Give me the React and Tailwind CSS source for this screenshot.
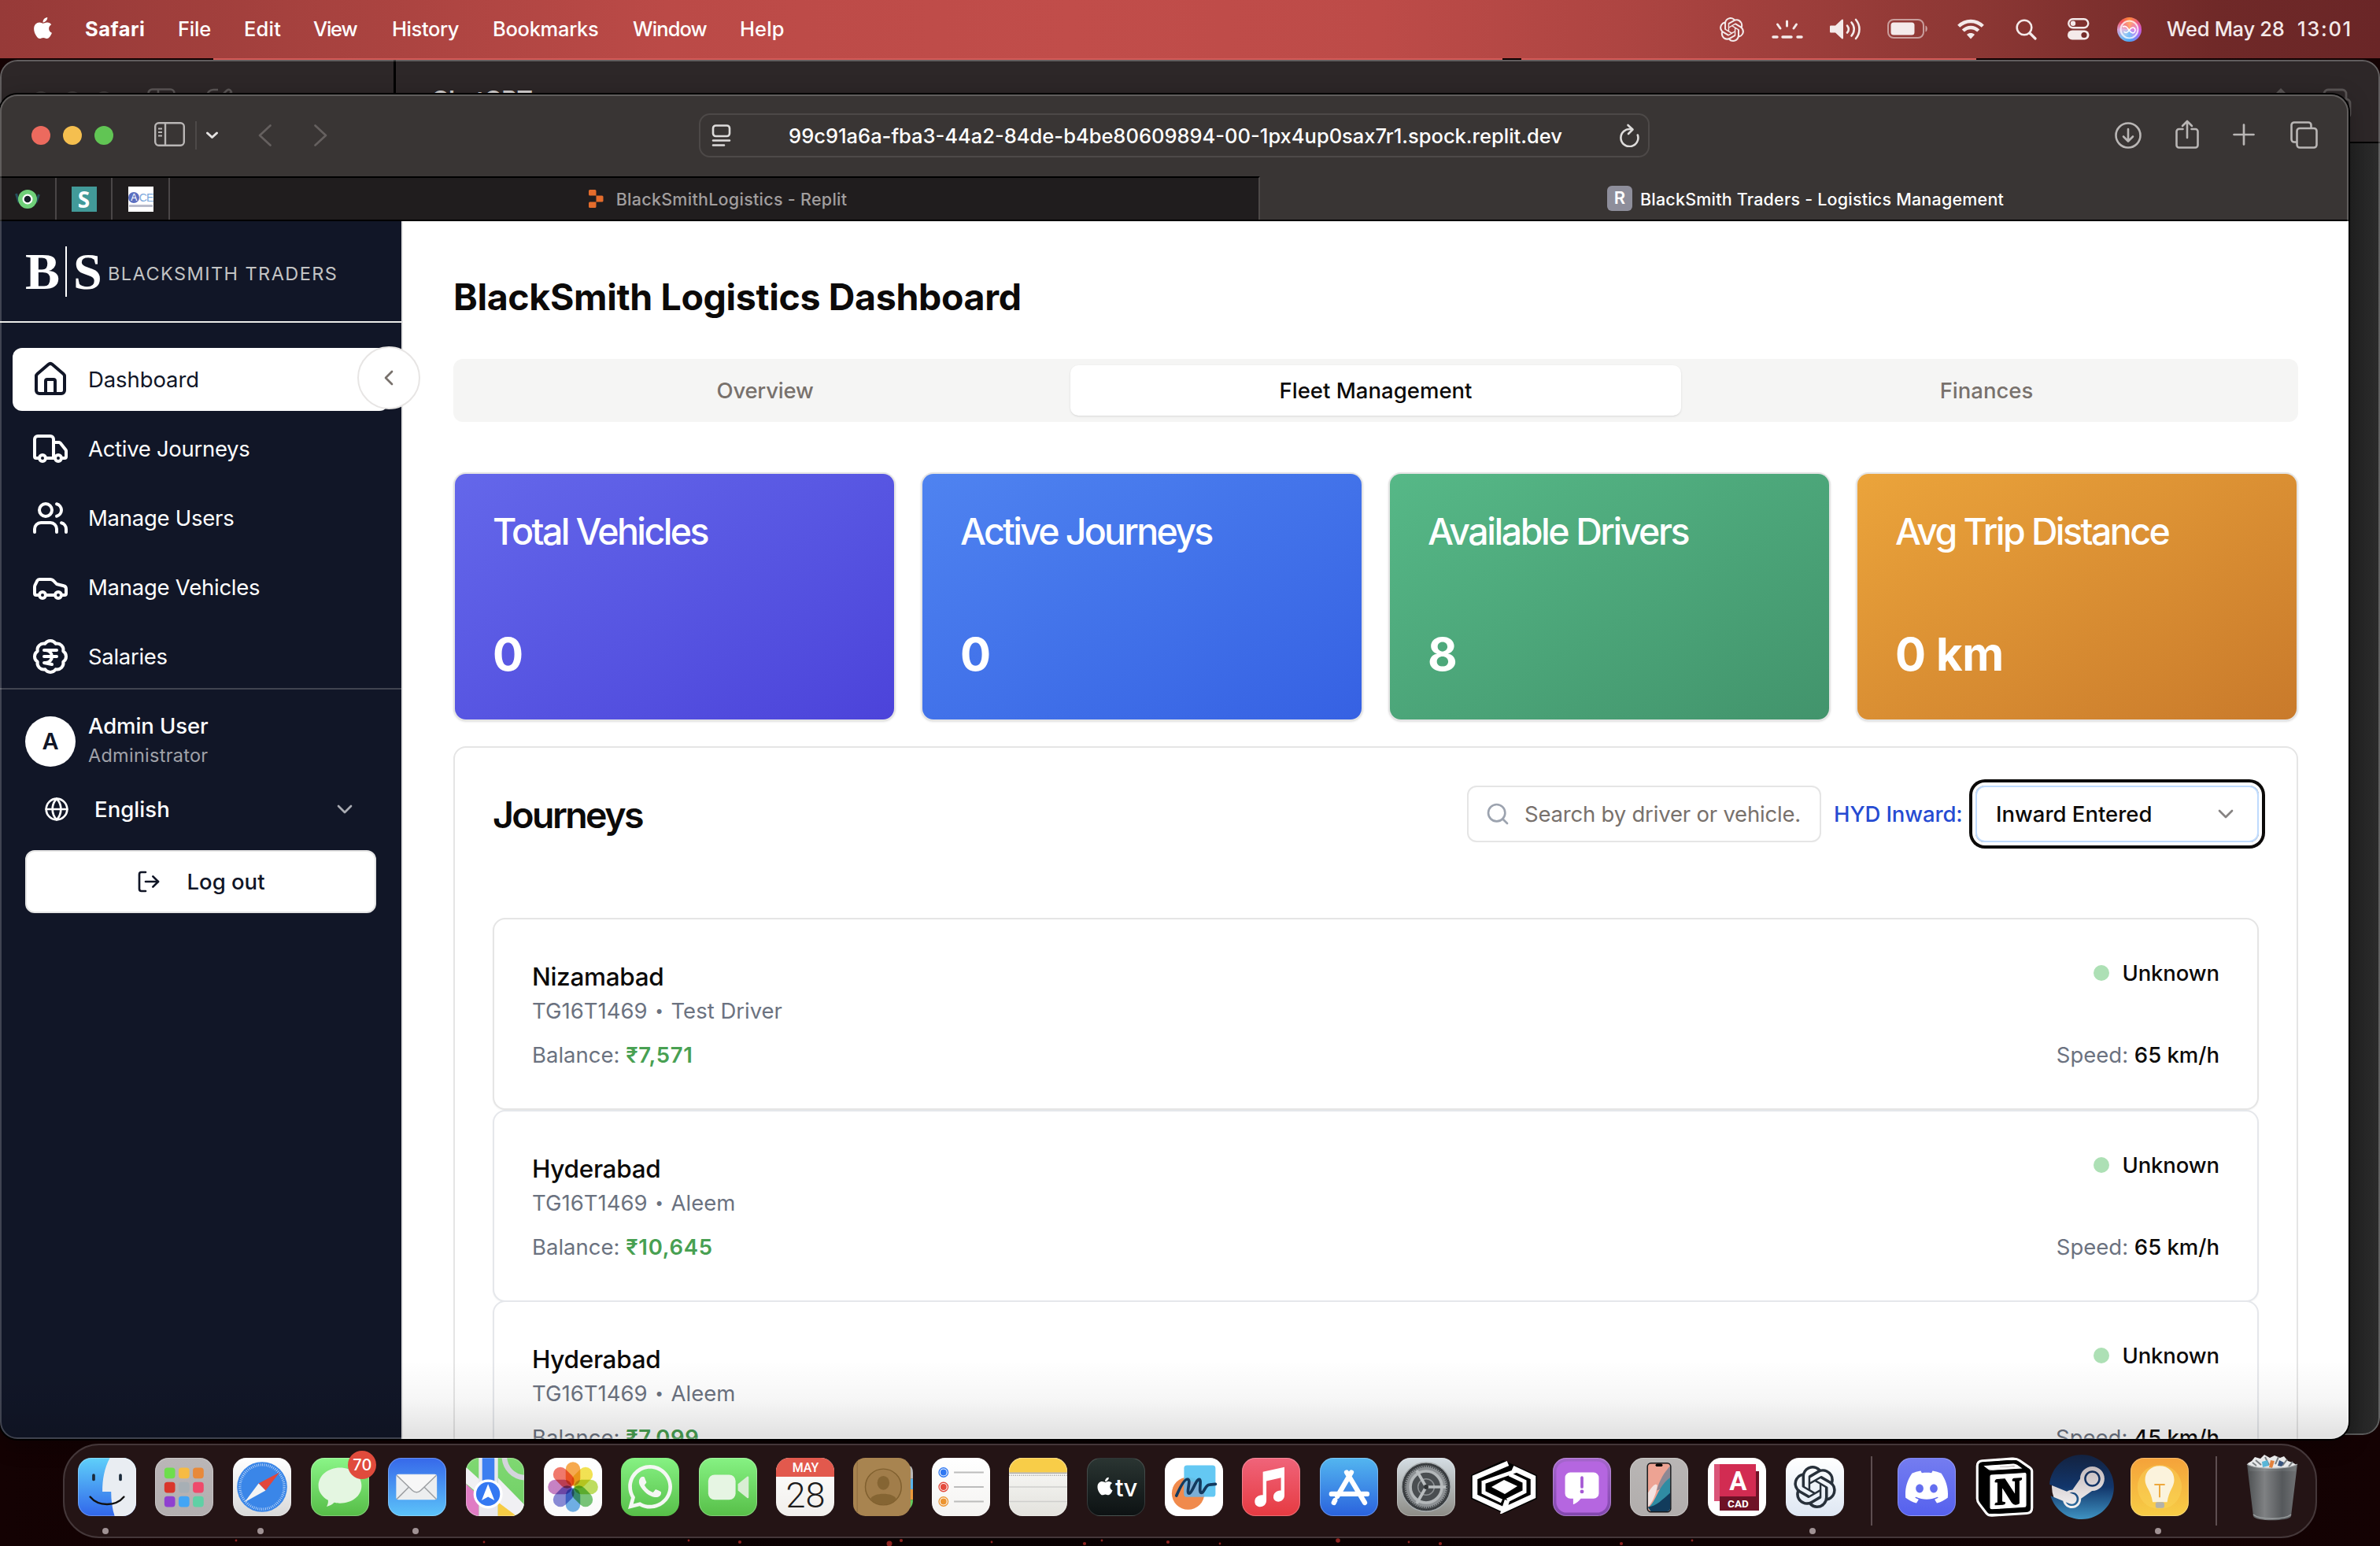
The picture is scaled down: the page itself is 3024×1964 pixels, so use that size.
import React from "react";
import {
  House, Truck, Users, Car, BadgeIndianRupee, ChevronLeft, ChevronDown, Globe, LogOut, Search,
} from "lucide-react";
import { SiOpenai, SiNotion, SiSteam, SiDiscord } from "react-icons/si";
import { FaApple, FaWhatsapp } from "react-icons/fa";

/* ---------- menu bar ---------- */

const MENUS = [
  ["File", "w-[84px] tracking-[-0.2px]"],
  ["Edit", "w-[88px] tracking-[0.2px]"],
  ["View", "w-[100px] tracking-[-1.2px]"],
  ["History", "w-[128px] tracking-[-0.4px]"],
  ["Bookmarks", "w-[178px] tracking-[-0.3px]"],
  ["Window", "w-[136px] tracking-[-0.9px]"],
  ["Help", "tracking-[0.1px]"],
];

function MenuBar() {
  return (
    <div className="absolute inset-x-0 top-0 flex h-[74px] items-center bg-[linear-gradient(90deg,#973a38_0%,#a5413e_12%,#bb4a47_28%,#c14d4a_45%,#bd4b48_58%,#ae4542_68%,#8c3734_83%,#702928_93%,#6a2627_100%)] pl-[41px] text-[25.5px] font-medium text-white">
      <div className="flex w-[67px]">
        <FaApple className="mb-[4px] size-[31px] -translate-x-[2px]" />
      </div>
      <div className="w-[118px] font-bold tracking-[0.5px]">Safari</div>
      {MENUS.map(([label, cls]) => (
        <div key={label} className={cls}>{label}</div>
      ))}
      <div className="ml-auto flex w-[839px] items-center text-[#f4eaea]">
        <div className="w-[66px]"><SiOpenai className="size-[31px]" /></div>
        <div className="w-[74px]">
          <svg width="40" height="24" viewBox="0 0 40 24" stroke="currentColor" strokeWidth="3" strokeLinecap="round">
            <path d="M19.5 2v6M7.500 6l3.500 5M31.500 6l-3.500 5" />
            <path d="M2 22h5M14 22h11M33 22h5" strokeWidth="3.500" />
          </svg>
        </div>
        <div className="w-[73px]">
          <svg width="40" height="28" viewBox="0 0 40 28" fill="none" stroke="currentColor" strokeWidth="2.600" strokeLinecap="round">
            <path d="M1 9.500h6l8-7.500c1-1 2-.5 2 1v22c0 1.500-1 2-2 1l-8-7.500H1.500C.7 18.500 0 18 0 17v-6c0-1 .5-1.500 1-1.500z" fill="currentColor" stroke="none" />
            <path d="M22 9.500c2.300 3 2.300 6.500 0 9M27.500 5.500c4.300 5 4.300 12 0 17M33 2c6 7 6 17 0 24" />
          </svg>
        </div>
        <div className="w-[89px]">
          <svg width="52" height="26" viewBox="0 0 52 26">
            <rect x="1" y="1" width="45" height="23" rx="7" fill="none" stroke="#fff" strokeOpacity=".5" strokeWidth="2" />
            <rect x="4.500" y="4.500" width="30" height="16" rx="3.500" fill="currentColor" />
            <path d="M48.500 8.500c3 1 3 7 0 8z" fill="#fff" fillOpacity=".55" />
          </svg>
        </div>
        <div className="w-[74px]">
          <svg width="34" height="26" viewBox="0 0 34 26" fill="none" stroke="currentColor" strokeWidth="4.400">
            <path d="M1.700 9.300C10.300 .8 23.700 .8 32.300 9.300" />
            <path d="M7.300 15C12.800 9.600 21.200 9.600 26.700 15" />
            <path d="M17 25.500l-5-5.500c2.800-2.600 7.200-2.600 10 0z" fill="currentColor" stroke="none" />
          </svg>
        </div>
        <div className="w-[66px]">
          <svg width="27" height="27" viewBox="0 0 27 27" fill="none" stroke="currentColor" strokeWidth="2.600" strokeLinecap="round">
            <circle cx="11" cy="11" r="9.300" />
            <path d="M18 18l7 7" strokeWidth="3.200" />
          </svg>
        </div>
        <div className="w-[63px]">
          <svg width="28" height="28" viewBox="0 0 28 28" fill="none" stroke="currentColor" strokeWidth="2.400">
            <rect x="1.300" y="1.300" width="25" height="11" rx="5.500" />
            <circle cx="7" cy="6.800" r="3.200" fill="currentColor" stroke="none" />
            <rect x="0" y="15.500" width="27.500" height="12" rx="6" fill="currentColor" stroke="none" />
            <circle cx="21" cy="21.500" r="3.600" fill="#742b2a" stroke="none" />
          </svg>
        </div>
        <div className="w-[63px]">
          <div className="flex size-[31px] items-center justify-center rounded-full bg-[conic-gradient(from_0deg,#ff8a3c,#f0607c,#d05ad8,#8a7cf5,#4aa8f5,#7fb8f0,#d8a0d8,#f04f5a,#ff8a3c)]">
            <svg width="25" height="25" viewBox="0 0 25 25" fill="none" stroke="#fff" strokeWidth="2">
              <circle cx="12.500" cy="12.500" r="11" strokeOpacity=".75" fill="#ffffff40" />
              <path d="M4 9c4-2 6 1 8 4s5 5 7 3 1-6-2-6-4 3-6 5-4 2-5 0" strokeWidth="1.600" />
            </svg>
          </div>
        </div>
        <div className="w-[166px] tracking-[-0.300px]">Wed May 28</div>
        <div className="tracking-[1.700px]">13:01</div>
      </div>
    </div>
  );
}

/* ---------- browser chrome ---------- */

function Toolbar() {
  return (
    <div className="flex h-[104px] shrink-0 items-center bg-[#393534] pl-[40px] text-[#b9b6b5]">
      <div className="flex gap-4">
        <span className="size-6 rounded-full bg-[#ec6a5e]" />
        <span className="size-6 rounded-full bg-[#f5bf4f]" />
        <span className="size-6 rounded-full bg-[#61c554]" />
      </div>
      <svg className="mb-[3px] ml-[52px]" width="39" height="31" viewBox="0 0 39 31" fill="none" stroke="currentColor" strokeWidth="2.400">
        <rect x="1.200" y="1.200" width="36.600" height="28.600" rx="4.500" />
        <path d="M14 1v29" />
        <path d="M5 8.500h5M5 13h5M5 17.500h5" strokeWidth="2" />
      </svg>
      <span className="ml-[13px] h-9 w-[2px] bg-[#4d4948]" />
      <svg className="ml-[11px]" width="17" height="10" viewBox="0 0 17 10" fill="none" stroke="#e4e2e1" strokeWidth="3" strokeLinecap="round" strokeLinejoin="round">
        <path d="M2.500 2l6 5.500 6-5.500" />
      </svg>
      <svg className="ml-[50px]" width="17" height="28" viewBox="0 0 17 28" fill="none" stroke="#65605f" strokeWidth="2.600" strokeLinecap="round" strokeLinejoin="round">
        <path d="M15.500 1.500L2 14l13.500 12.500" />
      </svg>
      <svg className="ml-[54px]" width="17" height="28" viewBox="0 0 17 28" fill="none" stroke="#65605f" strokeWidth="2.600" strokeLinecap="round" strokeLinejoin="round">
        <path d="M1.500 1.500L15 14 1.500 26.500" />
      </svg>
      <div className="ml-[472px] flex h-[56px] w-[1208px] items-center rounded-[14px] border-2 border-[#4d4948] pr-[9px] pl-[14px]">
        <svg width="26" height="28" viewBox="0 0 26 28" fill="none" stroke="#dedcdb" strokeWidth="2.600" strokeLinecap="round">
          <rect x="2" y="1.500" width="21" height="13.500" rx="3.500" />
          <path d="M2 20.500h21M2 26.500h14" />
        </svg>
        <div className="mt-[2px] flex-1 text-center text-[25.500px] font-medium text-white">
          99c91a6a-fba3-44a2-84de-b4be80609894-00-1px4up0sax7r1.spock.replit.dev
        </div>
        <svg width="28" height="30" viewBox="0 0 28 30" fill="none" stroke="#dedcdb" strokeWidth="2.600" strokeLinecap="round" strokeLinejoin="round">
          <path d="M23.800 14.500A11 11 0 1 1 15 7.200" />
          <path d="M11.500 2l6 5.500-5.500 5.500" />
        </svg>
      </div>
      <svg className="ml-[591px]" width="34" height="34" viewBox="0 0 34 34" fill="none" stroke="currentColor" strokeWidth="2.600" strokeLinecap="round" strokeLinejoin="round">
        <circle cx="17" cy="17" r="15.500" />
        <path d="M17 9v15.500M11 18.500l6 6 6-6" />
      </svg>
      <svg className="mb-[3px] ml-[43px]" width="30" height="37" viewBox="0 0 30 37" fill="none" stroke="currentColor" strokeWidth="2.600" strokeLinecap="round" strokeLinejoin="round">
        <path d="M9.500 12H4.500A3 3 0 0 0 1.500 15v17.500a3 3 0 0 0 3 3h21a3 3 0 0 0 3-3V15a3 3 0 0 0-3-3h-5" />
        <path d="M15 23V2M9 8l6-6 6 6" />
      </svg>
      <svg className="mb-[2px] ml-[43px]" width="28" height="28" viewBox="0 0 28 28" stroke="currentColor" strokeWidth="2.700" strokeLinecap="round">
        <path d="M14 1.500v25M1.500 14h25" />
      </svg>
      <svg className="mb-[1px] ml-[45px]" width="35" height="35" viewBox="0 0 35 35" fill="none" stroke="currentColor" strokeWidth="2.600">
        <path d="M8 26.500H5a3.500 3.500 0 0 1-3.500-3.500V5A3.500 3.500 0 0 1 5 1.500h18A3.500 3.500 0 0 1 26.500 5v3" />
        <rect x="8.500" y="9" width="25" height="24.500" rx="3.500" />
      </svg>
    </div>
  );
}

function TabBar() {
  return (
    <div className="flex h-[57px] shrink-0 border-b-2 border-black bg-[#393534]">
      <div className="flex w-[1601px] border-t-2 border-r-2 border-t-black border-r-[#4d4948] bg-[#201d1e]">
        <div className="flex w-[72px] items-center justify-center border-r-2 border-[#4a4647]">
          <svg width="32" height="26" viewBox="0 0 32 26">
            <path d="M5 17L1.500 6M27 17l3.500-10" stroke="#24505c" strokeWidth="3" />
            <circle cx="16" cy="13" r="12" fill="#6fd079" />
            <circle cx="16" cy="13" r="6.500" fill="#fff" />
            <circle cx="16" cy="13" r="4.300" fill="#16202a" />
          </svg>
        </div>
        <div className="flex w-[71px] items-center justify-center border-r-2 border-[#4a4647]">
          <div className="flex size-8 items-center justify-center bg-[#429a99] font-['Noto_Sans'] text-[28px] leading-none font-bold text-white">S</div>
        </div>
        <div className="flex w-[73px] items-center justify-center border-r-2 border-[#4a4647]">
          <div className="flex size-8 flex-col items-center justify-center bg-white">
            <div className="flex items-center font-['Liberation_Sans'] text-[14px] leading-[18px] tracking-[-1px] text-[#7aa7dc]">
              <span className="flex size-[14px] items-center justify-center rounded-full bg-[#5b6fc0] text-[12px] text-white">A</span>CE
            </div>
            <div className="h-[3px] w-[30px] bg-[#b9bccb]" />
          </div>
        </div>
        <div className="flex flex-1 items-center justify-center gap-[15px] pl-[9px] text-[21.500px] font-medium tracking-[0.27px] text-[#a19e9e]">
          <svg width="20" height="23" viewBox="0 0 20 23" fill="#e46c2c">
            <path d="M1.500 0h6.500a1.500 1.500 0 0 1 1.500 1.500v6H1.500A1.500 1.500 0 0 1 0 6V1.500A1.500 1.500 0 0 1 1.500 0zM9.500 7.500H17A1.500 1.500 0 0 1 18.500 9v5a1.500 1.500 0 0 1-1.500 1.500H9.500zM1.500 15.500h8V21.500A1.500 1.500 0 0 1 8 23H1.500A1.500 1.500 0 0 1 0 21.500V17a1.500 1.500 0 0 1 1.500-1.500z" />
          </svg>
          <span className="mt-[1px]">BlackSmithLogistics - Replit</span>
        </div>
      </div>
      <div className="flex flex-1 items-center justify-center gap-[10px] pl-[3px] text-[21.500px] font-medium tracking-[0.2px] text-white">
        <span className="flex size-8 items-center justify-center rounded-[6px] bg-[#8e8e9b] text-[22px] font-semibold">R</span>
        <span className="mt-[3px]">BlackSmith Traders - Logistics Management</span>
      </div>
    </div>
  );
}

/* ---------- application ---------- */

const NAV = [
  [House, "Dashboard", "mt-[1px] tracking-[-0.1px]"],
  [Truck, "Active Journeys", "mt-[1px] tracking-[-0.3px]"],
  [Users, "Manage Users", "mt-[1px] tracking-[-0.25px]"],
  [Car, "Manage Vehicles", "mt-[1px] tracking-[-0.25px]"],
  [BadgeIndianRupee, "Salaries", "mt-[1px] tracking-[-0.3px]"],
];

function Sidebar() {
  return (
    <aside className="relative flex w-[512px] shrink-0 flex-col border-r-2 border-[#e5e5e5] bg-[#111627] text-[27.500px] text-white">
      <div className="flex h-[129px] items-center border-b-2 border-[#ecebe9] pl-[32px]">
        <span className="w-[51px] font-['Liberation_Serif'] text-[66px] leading-none font-bold">B</span>
        <span className="h-16 w-[2px] bg-white" />
        <span className="ml-[8px] w-[44px] font-['Liberation_Serif'] text-[66px] leading-none font-bold">S</span>
        <span className="mt-[6px] text-[23.500px] tracking-[1.440px] text-[#c3c4c4]">BLACKSMITH TRADERS</span>
      </div>
      <nav className="flex flex-col gap-2 border-b-2 border-[#414450] px-4 pt-8">
        {NAV.map(([Icon, label, cls], i) => (
          <div
            key={label}
            className={
              i === 0
                ? "flex h-20 items-center gap-6 rounded-xl bg-white pl-6 text-[#111627]"
                : "flex h-20 items-center gap-6 pl-6"
            }
          >
            <Icon size={48} strokeWidth={2} />
            <span className={cls}>{label}</span>
          </div>
        ))}
      </nav>
      <div className="px-8 pt-[26px]">
        <div className="flex items-center gap-4">
          <div className="mt-1 flex size-16 items-center justify-center rounded-full bg-white text-[29px] font-semibold text-[#111627]">A</div>
          <div>
            <div className="h-[39px] leading-[41px] font-medium tracking-[-0.1px]">Admin User</div>
            <div className="h-[37px] text-[23.500px] leading-[38px] tracking-[0.260px] text-[#a0a2a9]">Administrator</div>
          </div>
        </div>
        <div className="mt-[14px] flex h-[72px] items-center px-6 font-medium">
          <Globe size={32} />
          <span className="mt-[1px] ml-8 tracking-[0.050px]">English</span>
          <ChevronDown size={32} className="ml-auto text-[#a9abb2]" />
        </div>
        <div className="mt-4 flex h-20 items-center justify-center gap-8 rounded-xl border-2 border-[#e5e5e5] bg-white font-medium text-[#111627]">
          <LogOut size={32} />
          <span className="mt-[1px]">Log out</span>
        </div>
      </div>
      <div className="absolute top-[159px] left-[454px] z-10 flex size-20 items-center justify-center rounded-full border-2 border-[#e7e5e4] bg-white text-[#78716c]">
        <ChevronLeft size={32} />
      </div>
    </aside>
  );
}

const STATS = [
  ["Total Vehicles", "0", "from-[#6467ea] to-[#4c43da]", "tracking-[-2.640px]"],
  ["Active Journeys", "0", "from-[#4f83f0] to-[#3661e3]", "tracking-[-2.700px]"],
  ["Available Drivers", "8", "from-[#56b887] to-[#42946c]", "tracking-[-2.450px]"],
  ["Avg Trip Distance", "0 km", "from-[#eba43b] to-[#c97a2b]", "tracking-[-2.570px]"],
];

const JOURNEYS = [
  ["Nizamabad", "Test Driver", "₹7,571", "65 km/h", "h-[244px] border-[#e5e5e5]"],
  ["Hyderabad", "Aleem", "₹10,645", "65 km/h", "h-[244px] border-[#e5e7eb]"],
  ["Hyderabad", "Aleem", "₹7,099", "45 km/h", "-mt-[2px] h-[244px] border-[#e5e7eb]"],
];

function Journey({ row: [city, driver, balance, speed, cls] }) {
  return (
    <div className={`flex shrink-0 justify-between rounded-2xl border-2 bg-white p-12 text-[27.500px] shadow-xs ${cls}`}>
      <div>
        <div className="mt-[2px] h-[46px] text-[31.500px] leading-[46px] font-medium tracking-[-0.320px] text-[#0c0a09]">{city}</div>
        <div className="flex h-10 items-center leading-10 text-[#6b7280]">
          TG16T1469
          <span className="w-[30px] pt-[2px] text-center text-[19px]">•</span>
          {driver}
        </div>
        <div className="mt-4 h-10 leading-10 text-[#6b7280]">
          Balance: <span className="font-semibold tracking-[0.700px] text-[#48a052]">{balance}</span>
        </div>
      </div>
      <div className="flex flex-col items-end">
        <div className="flex h-10 items-center gap-4 font-medium tracking-[-0.100px] text-[#0c0a09]">
          <span className="size-5 rounded-full bg-[#ade0b5]" />
          <span className="mt-[1px]">Unknown</span>
        </div>
        <div className="mt-16 h-10 leading-10 text-[#6b7280]">
          Speed: <span className="font-medium text-[#0c0a09]">{speed}</span>
        </div>
      </div>
    </div>
  );
}

function Dashboard() {
  return (
    <main className="flex h-full flex-1 flex-col overflow-hidden bg-white px-16 pt-[72px]">
      <h1 className="h-12 shrink-0 text-[46.500px] leading-[48px] font-bold tracking-[-0.350px] text-[#0c0a09]">
        BlackSmith Logistics Dashboard
      </h1>
      <div className="mt-[55px] grid h-20 shrink-0 grid-cols-3 rounded-xl bg-[#f5f5f4] p-2 text-center text-[27.500px] leading-[64px] font-medium text-[#78716c]">
        <div className="tracking-[-0.240px]">Overview</div>
        <div className="rounded-[10px] bg-white tracking-[0.020px] text-[#0c0a09] shadow-sm">Fleet Management</div>
        <div>Finances</div>
      </div>
      <div className="mt-16 grid shrink-0 grid-cols-4 gap-8">
        {STATS.map(([title, value, grad, track]) => (
          <div key={title} className="rounded-2xl border-2 border-[#e5e5e5] bg-[#e5e5e5] shadow-sm">
            <div className={`flex h-[312px] flex-col justify-between rounded-[14px] bg-gradient-to-br px-12 pt-[49px] pb-[50px] text-white ${grad}`}>
              <div className={`text-[46.500px] leading-[48px] font-medium whitespace-nowrap ${track}`}>{title}</div>
              <div className="text-[58px] leading-[66px] font-bold tracking-[-0.400px]">{value}</div>
            </div>
          </div>
        ))}
      </div>
      <section className="mt-8 h-[1000px] shrink-0 rounded-2xl border-2 border-[#e5e5e5] px-12 pt-12">
        <div className="flex h-[72px] items-center text-[27.500px]">
          <h2 className="mt-[3px] text-[46.500px] font-semibold tracking-[-2.600px] text-[#0c0a09]">Journeys</h2>
          <div className="ml-auto flex h-[72px] w-[450px] items-center gap-[18px] rounded-xl border-2 border-[#e5e5e5] pl-[21px] tracking-[-0.200px] text-[#78716c]">
            <Search size={32} className="text-[#9ca3af]" />
            <span className="mt-[2px]">Search by driver or vehicle.</span>
          </div>
          <div className="mt-[1px] ml-[16px] w-[180px] font-medium tracking-[-0.100px] text-[#264bd2]">HYD Inward:</div>
          <div className="flex h-[72px] w-[360px] items-center justify-between rounded-xl border-2 border-[#bfdbfe] pr-[24px] pl-[24px] font-medium text-[#0c0a09] shadow-[0_0_0_4px_#fff,0_0_0_8px_#0c0a09]">
            <span className="mt-[1px]">Inward Entered</span>
            <ChevronDown size={32} className="text-[#868382]" />
          </div>
        </div>
        <div className="mt-24 flex flex-col">
          {JOURNEYS.map((row, i) => (
            <Journey key={i} row={row} />
          ))}
        </div>
      </section>
    </main>
  );
}

/* ---------- windows ---------- */

function BackWindow() {
  return (
    <div className="absolute top-[76px] left-0 h-[1747px] w-[3024px] overflow-hidden rounded-[22px] bg-[linear-gradient(90deg,#222_98.700%,#2c2c2c_100%)]">
      <div className="flex h-[106px] border-b-2 border-black bg-[#2d2728] text-[#4b4646]">
        <div className="flex w-[503px] items-start border-r-[3px] border-black pt-[40px] pl-[40px]">
          <div className="flex gap-4">
            <span className="size-6 rounded-full bg-[#443f3f]" />
            <span className="size-6 rounded-full bg-[#443f3f]" />
            <span className="size-6 rounded-full bg-[#443f3f]" />
          </div>
          <svg className="-mt-[4px] ml-[43px]" width="112" height="34" viewBox="0 0 112 34" fill="none" stroke="#5c5757" strokeWidth="2.600">
            <rect x="1.500" y="1.500" width="33" height="28" rx="5" />
            <path d="M14 1.500v28M90 2H84a8 8 0 0 0-8 8v18M90 14l11-11q4-3 6 2L94 18z" />
          </svg>
        </div>
        <div className="pt-[30px] pl-[45px] text-[31px] leading-[42px] font-semibold tracking-[-0.900px] text-[#d5d2d2]">ChatGPT</div>
        <svg className="mt-[36px] mr-[36px] ml-auto" width="96" height="48" viewBox="0 0 96 48" fill="none" stroke="#5a5555" strokeWidth="2.800">
          <path d="M-1 9l7-7 7 7M6 2v20" />
          <path d="M61 22V7a5 5 0 0 1 5-5h18a5 5 0 0 1 5 5v7" />
          <path d="M80 14h9a5 5 0 0 1 5 5v14a5 5 0 0 1-5 5h-9" />
        </svg>
      </div>
      <div className="pointer-events-none absolute inset-0 rounded-[22px] border-2 border-white/25" />
    </div>
  );
}

function BrowserWindow() {
  return (
    <div className="absolute top-[120px] left-0 h-[1708px] w-[2984px] rounded-[22px] shadow-[0_0_0_2px_#000,0_6px_30px_rgba(0,0,0,.3)]">
      <div className="flex h-full w-full flex-col overflow-hidden rounded-[22px]">
        <Toolbar />
        <TabBar />
        <div className="flex min-h-0 flex-1">
          <Sidebar />
          <Dashboard />
        </div>
      </div>
      <div className="pointer-events-none absolute inset-x-0 bottom-0 h-[100px] rounded-b-[22px] bg-[linear-gradient(180deg,transparent,rgba(0,0,0,.035)_50%,rgba(0,0,0,.12))]" />
      <div className="pointer-events-none absolute inset-0 rounded-[22px] border-2 border-white/20" />
    </div>
  );
}

/* ---------- dock ---------- */

function Tile({ from, to = from, id, children }) {
  return (
    <svg width="74" height="74" viewBox="0 0 100 100">
      <defs>
        <linearGradient id={id} x1="0" y1="0" x2="0" y2="1">
          <stop offset="0" stopColor={from} />
          <stop offset="1" stopColor={to} />
        </linearGradient>
        <clipPath id={id + "-clip"}>
          <rect width="100" height="100" rx="23" />
        </clipPath>
      </defs>
      <g clipPath={`url(#${id}-clip)`}>
        <rect width="100" height="100" fill={`url(#${id})`} />
        {children}
      </g>
      <rect x=".7" y=".7" width="98.600" height="98.600" rx="22.500" fill="none" stroke="#fff" strokeOpacity=".25" strokeWidth="1.400" />
    </svg>
  );
}

const Finder = () => (
  <Tile id="finder" from="#5fd0fa" to="#3166ea">
    <path d="M55 0C45 18 42 38 42 58h15c0 15 2 30 6 42h37V0z" fill="#e9edf2" />
    <path d="M27 30v7M73 30v7" stroke="#1b2a3a" strokeWidth="5" strokeLinecap="round" />
    <path d="M21 67c14 17 44 17 58 0" fill="none" stroke="#111" strokeWidth="3.200" strokeLinecap="round" />
  </Tile>
);

const PAD = ["#6ede4c", "#f6bb43", "#e8893a", "#d9362b", "#a7afb5", "#ef4a6b", "#8f40d0", "#42a5f5", "#5fd0a5"];
const Launchpad = () => (
  <Tile id="launchpad" from="#bab6b7" to="#b3afb0">
    {PAD.map((c, i) => (
      <rect key={c} x={16 + (i % 3) * 24.5} y={17 + Math.floor(i / 3) * 24.5} width="18.500" height="18.500" rx="5" fill={c} />
    ))}
  </Tile>
);

const Safari = () => (
  <Tile id="safari" from="#ffffff" to="#d9d9d9">
    <circle cx="50" cy="50" r="43" fill="#3a86e8" />
    <circle cx="50" cy="50" r="38" fill="none" stroke="#fff" strokeOpacity=".75" strokeWidth="4.500" strokeDasharray="1 2.317" />
    <path d="M80 25L56 56 44 44z" fill="#e2463b" />
    <path d="M20 76l24-32 12 12z" fill="#f4f4f4" />
  </Tile>
);

const Messages = () => (
  <Tile id="messages" from="#8af587" to="#56bd47">
    <path d="M50 17c20 0 37 13 37 31S70 78 50 78c-4 0-7-.5-10-1.200-3 3-8 6-13 7 2-3 3-7 2.500-11C19 67 13 58 13 48c0-18 17-31 37-31z" fill="#e4f6e1" />
  </Tile>
);

const Mail = () => (
  <Tile id="mail" from="#3668ea" to="#5cc3f9">
    <rect x="14" y="28" width="70" height="44" rx="4" fill="#eceeef" />
    <path d="M15 71l24-24M83 71L59 47" stroke="#9c9fa2" strokeWidth="2" />
    <path d="M15 30l27 26c4 4 10 4 14 0l27-26" fill="#f7f7f7" stroke="#9c9fa2" strokeWidth="2" />
  </Tile>
);

const Maps = () => (
  <Tile id="maps" from="#7fd872" to="#6fcf64">
    <path d="M55 50l45 50H55z" fill="#f0f0f3" />
    <path d="M55 34l45 46v20L55 62z" fill="#f0f0f3" />
    <path d="M0 16l24 22v26L0 44z" fill="#f0f0f3" />
    <path d="M22 0h33v100H22z" fill="#e8e8ee" />
    <path d="M28 0h21v70H28z" fill="#3d7ff0" />
    <path d="M0 45l22 20v35H0z" fill="#e07cc4" />
    <path d="M55 76l32 24H55z" fill="#f6cc45" />
    <path d="M66 0c2 18 14 32 34 34" fill="none" stroke="#d4d4dc" strokeWidth="9" />
    <circle cx="38" cy="62" r="25" fill="#fff" />
    <circle cx="38" cy="62" r="20.500" fill="#3478f2" />
    <path d="M38 45l11 28-11-6-11 6z" fill="#fff" />
  </Tile>
);

const PETALS = ["#f6a13c", "#f2e040", "#b8dc50", "#6cc06a", "#62a8e4", "#7d7fd4", "#c276c0", "#f06a5c"];
const Photos = () => (
  <Tile id="photos" from="#ffffff" to="#fafafa">
    {PETALS.map((c, i) => (
      <rect key={c} x="37.500" y="7" width="25" height="41" rx="12.500" fill={c} fillOpacity=".9" transform={`rotate(${i * 45} 50 50)`} className="mix-blend-multiply" />
    ))}
  </Tile>
);

const WhatsApp = () => (
  <div className="flex size-[74px] items-center justify-center rounded-[17px] bg-linear-to-b from-[#86f283] to-[#57bf48] text-[#f4f7f3]">
    <FaWhatsapp className="size-[64px]" />
  </div>
);

const FaceTime = () => (
  <Tile id="facetime" from="#86f283" to="#57bf48">
    <rect x="16" y="29" width="47" height="43" rx="11" fill="#e6f5e3" />
    <path d="M67 45l16-13c1-1 2.500 0 2.500 1.500v34c0 1.500-1.500 2.500-2.500 1.500L67 56z" fill="#d8eed4" />
  </Tile>
);

const Calendar = () => (
  <div className="flex size-[74px] flex-col overflow-hidden rounded-[17px] bg-linear-to-b from-white to-[#f1efec] text-center">
    <div className="h-[24px] bg-[#e2594d] font-['Roboto'] text-[16px] leading-[25px] font-medium text-white">MAY</div>
    <div className="h-[50px] font-['Roboto'] text-[45px] leading-[47px] font-light text-[#1c1c1c]">28</div>
  </div>
);

const Contacts = () => (
  <svg width="76" height="74" viewBox="0 0 103 100">
    <path d="M95 14h3q5 2 5 12v10h-8z" fill="#b9b9b9" />
    <path d="M95 36h8v18h-8z" fill="#58b4ee" />
    <path d="M95 54h8v18h-8z" fill="#ee9a3a" />
    <path d="M95 72h8c0 8-3 14-8 16z" fill="#63cf5c" />
    <rect width="99" height="100" rx="21" fill="#a88450" />
    <path d="M7 6v88" stroke="#8f6e40" strokeWidth="1.500" />
    <circle cx="52" cy="50" r="31" fill="#a17d4a" stroke="#80602f" strokeWidth="2" />
    <ellipse cx="52" cy="43" rx="10.500" ry="12" fill="#80602f" fillOpacity=".85" />
    <path d="M30 70c5-11 39-11 44 0-10 14-34 14-44 0z" fill="#80602f" fillOpacity=".85" />
  </svg>
);

const Reminders = () => (
  <Tile id="reminders" from="#ffffff" to="#f4f3f1">
    {["#2f78f2", "#e34a3d", "#eb9431"].map((c, i) => (
      <g key={c}>
        <circle cx="20" cy={25 + i * 25} r="7.800" fill="#fff" stroke={c} strokeWidth="1.800" />
        <circle cx="20" cy={25 + i * 25} r="5.300" fill={c} />
        <path d={`M38 ${25 + i * 25}h51`} stroke="#bcbcbc" strokeWidth="2.400" />
      </g>
    ))}
  </Tile>
);

const Notes = () => (
  <Tile id="notes" from="#fbfbf9" to="#e3e2dd">
    <rect width="100" height="25" fill="#f8cd48" />
    <path d="M0 26h100" stroke="#8b8a85" strokeWidth="1.500" />
    <path d="M0 30h100" stroke="#a3a29e" strokeWidth="2" strokeDasharray="1.500 2" />
    <path d="M0 50h100M0 75h100" stroke="#cfcfcd" strokeWidth="2" />
  </Tile>
);

const AppleTV = () => (
  <div className="flex size-[74px] items-center justify-center rounded-[17px] border border-white/15 bg-linear-to-b from-[#2a3532] to-[#0d1213] text-white">
    <FaApple className="mb-[3px] size-[26px]" />
    <span className="text-[31px] leading-none font-medium tracking-[-0.500px]">tv</span>
  </div>
);

const Freeform = () => (
  <Tile id="freeform" from="#ffffff">
    <circle cx="40" cy="61" r="28" fill="#f08a4c" />
    <rect x="33" y="13" width="54" height="54" rx="5" fill="#58c4f2" fillOpacity=".93" />
    <path d="M42 40a28 28 0 0 1 26 27H38a5 5 0 0 1-5-5V42z" fill="#86a7cf" fillOpacity=".7" />
    <path d="M20 65c6-14 14-30 20-28 5 2-4 24 2 24 5 0 11-24 17-24 5 0-2 23 4 23 5 0 6-14 14-14l10-1" fill="none" stroke="#133a5f" strokeWidth="5" strokeLinecap="round" />
  </Tile>
);

const Music = () => (
  <Tile id="music" from="#f0647a" to="#e63a41">
    <path d="M36 24l37-8v48c0 14-19 15-19 3 0-9 9-11 13-11V34l-25 6v33c0 14-20 15-20 2 0-9 9-11 14-11z" fill="#fff" />
  </Tile>
);

const AppStore = () => (
  <Tile id="appstore" from="#53b6f0" to="#2a62dd">
    <path d="M20 62h61M54 25L30 66M26 73l-2 4M46 25l31 52" stroke="#fff" strokeWidth="8.500" strokeLinecap="round" />
  </Tile>
);

const Settings = () => (
  <Tile id="settings" from="#d5dee4" to="#8d8c86">
    <circle cx="50" cy="50" r="42" fill="#34373a" stroke="#a6abad" strokeWidth="2" />
    <circle cx="50" cy="50" r="37" fill="#8d9194" stroke="#43474a" strokeWidth="6" strokeDasharray="2 1.900" />
    <circle cx="50" cy="50" r="27" fill="#4a4e51" stroke="#b3b7b9" strokeWidth="5" />
    <circle cx="50" cy="50" r="14" fill="none" stroke="#8d9194" strokeWidth="2" />
    <path d="M50 50h34M50 50L34 22M50 50L34 78" stroke="#b9bdbf" strokeWidth="5" />
    <circle cx="50" cy="50" r="4" fill="#303335" />
  </Tile>
);

/* Hexagonal maze mark: two nested open rings around a centre rhombus. */
const HexMaze = () => (
  <svg width="86" height="68" viewBox="0 0 86 68">
    <path d="M42 0l43 19v30L43 68 1 49V19z" fill="#000" />
    <g fill="none" stroke="#fff" strokeWidth="6.500">
      <path d="M48 4L6 22v24l37 17" />
      <path d="M54 10l26 12v24L43 63l4-12" />
      <path d="M60 13L17 28M17 26v15l23 11M50 18l19 9v13L47 51" strokeWidth="5" />
    </g>
    <path d="M43 25l17 8-16 10-17-9z" fill="#fff" />
  </svg>
);

const Feedback = () => (
  <Tile id="feedback" from="#a566cc" to="#8347ae">
    <rect x="6" y="6" width="88" height="88" rx="18" fill="#b566e0" />
    <path d="M30 25h40a9 9 0 0 1 9 9v27a9 9 0 0 1-9 9H48c-3 4-7 8-13 10V70h-5a9 9 0 0 1-9-9V34a9 9 0 0 1 9-9z" fill="#fff" />
    <path d="M50 34v16" stroke="#a558d4" strokeWidth="5" strokeLinecap="round" />
    <circle cx="50" cy="58" r="3.300" fill="#a558d4" />
  </Tile>
);

const Phone = () => (
  <Tile id="phone" from="#b9b6b5" to="#b1adac">
    <rect x="29" y="8" width="42" height="86" rx="7" fill="#16181b" />
    <rect x="31" y="10" width="38" height="82" rx="5.500" fill="#eda393" />
    <path d="M69 14v34L46 56c4-16 12-30 23-42z" fill="#8d8894" />
    <path d="M69 34v52a6 6 0 0 1-6 6H36l-5-6C46 74 48 48 69 34z" fill="#2f8ca3" />
    <path d="M69 60v26a6 6 0 0 1-6 6H36l-5-8c14 0 26-14 38-24z" fill="#123c5c" />
    <path d="M31 84c10-10 14-24 16-36 0 0-2-10-16 12z" fill="#f3e3e0" />
    <rect x="44" y="10" width="12" height="5" rx="2.500" fill="#000" />
  </Tile>
);

const AutoCad = () => (
  <div className="flex size-[74px] items-center justify-center rounded-[17px] bg-white">
    <div className="flex">
      <div className="h-[47px] w-[7px] bg-[#da5478]" />
      <div className="w-[46px] bg-[#d22c52] text-center font-['Roboto'] font-bold text-white">
        <div className="h-[41px] text-[33px] leading-[43px]">A</div>
        <div className="h-[18px] bg-[#6e1226] text-[13.500px] leading-[18px]">CAD</div>
      </div>
      <div className="mt-[9px] h-[50px] w-[4px] bg-[#6e1226]" />
    </div>
  </div>
);

const ChatGPT = () => (
  <div className="flex size-[74px] items-center justify-center rounded-[17px] bg-linear-to-b from-white to-[#dee7f3] text-[#27303a]">
    <SiOpenai className="size-[54px]" />
  </div>
);

const Discord = () => (
  <div className="flex size-[74px] items-center justify-center rounded-[17px] border border-white/25 bg-linear-to-b from-[#747cf0] to-[#5661ee] text-white">
    <SiDiscord className="size-[54px]" />
  </div>
);

const Notion = () => (
  <div className="grid size-[78px] place-items-center *:col-start-1 *:row-start-1">
    <SiNotion className="size-[68px] overflow-visible" fill="#fff" stroke="#fff" strokeWidth={2.6} strokeLinejoin="round" />
    <span className="mt-[4px] ml-[2px] size-[54px] bg-white" />
    <SiNotion className="size-[68px]" fill="#000" stroke="#000" strokeWidth={0.4} />
  </div>
);

const Steam = () => (
  <div className="grid size-[82px] place-items-center *:col-start-1 *:row-start-1">
    <svg width="0" height="0">
      <linearGradient id="steam" x1="0" y1="0" x2="0" y2="1">
        <stop offset="0" stopColor="#132240" />
        <stop offset=".5" stopColor="#12366b" />
        <stop offset="1" stopColor="#3f93c2" />
      </linearGradient>
    </svg>
    <span className="size-[76px] rounded-full bg-linear-to-b from-[#b8adb0] to-white" />
    <SiSteam className="size-[82px]" fill="url(#steam)" />
  </div>
);

const Bulb = () => (
  <Tile id="bulb" from="#f5a23a" to="#f7cd46">
    <circle cx="50" cy="50" r="38" fill="#fbd75c" fillOpacity=".45" />
    <path d="M50 14c15 0 25 10 25 24 0 12-9 18-12 38H38c-3-20-13-26-13-38 0-14 10-24 25-24z" fill="#fbf3dc" />
    <path d="M41 46h18M50 46v22" stroke="#eea83c" strokeWidth="2.600" />
    <rect x="43" y="76" width="15" height="10" rx="3" fill="#b3b2aa" />
  </Tile>
);

const Trash = () => (
  <svg width="66" height="86" viewBox="0 0 66 86">
    <defs>
      <linearGradient id="trash" x1="0" y1="0" x2="1" y2="0">
        <stop offset="0" stopColor="#4f5355" />
        <stop offset=".35" stopColor="#848789" />
        <stop offset=".7" stopColor="#585c5f" />
        <stop offset="1" stopColor="#75787a" />
      </linearGradient>
    </defs>
    <path d="M2 13l5-3 4-5 7 2 5-5 7 4 6-3 7 3 5-2 5 6 6 2 5 3-2 8H4z" fill="#e9eaeb" />
    <path d="M12 9l7 6M24 5l5 10M41 5l-4 9M52 8l-6 8M8 12l5 4M59 11l-5 6" stroke="#7b7f82" strokeWidth="2" />
    <path d="M20 11l7-2 2 7-8 2z" fill="#58b6d8" />
    <path d="M31 9l5 1-3 9-4-1z" fill="#e2813c" />
    <path d="M42 9l6 3-3 5-5-1z" fill="#39557e" />
    <path d="M1 14c12 7 52 7 64 0l-8 66c-1 7-47 7-48 0z" fill="url(#trash)" fillOpacity=".95" />
    <path d="M1 14c12 7 52 7 64 0" fill="none" stroke="#aeb1b3" strokeWidth="1.200" />
    <path d="M9 78c8 7 40 7 48 0" fill="none" stroke="#9b9fa0" strokeWidth="1.500" />
  </svg>
);

const APPS = [
  [Finder, true], [Launchpad], [Safari, true], [Messages, false, "70"], [Mail, true], [Maps], [Photos],
  [WhatsApp], [FaceTime], [Calendar], [Contacts], [Reminders], [Notes], [AppleTV], [Freeform], [Music],
  [AppStore], [Settings], [HexMaze], [Feedback], [Phone], [AutoCad], [ChatGPT, true],
];
const RECENT = [[Discord], [Notion], [Steam], [Bulb, true]];

function Slot({ app: [Icon, running, badge] }) {
  return (
    <div className="relative flex h-full w-[98.640px] shrink-0 items-center justify-center pb-[10px]">
      <Icon />
      {badge && (
        <span className="absolute top-[7px] left-[60px] flex size-[36px] items-center justify-center rounded-full bg-[#e04b3c] text-[20px] font-medium text-white">
          {badge}
        </span>
      )}
      {running && <span className="absolute bottom-[3px] left-[43px] size-2 rounded-full bg-[#a09294]" />}
    </div>
  );
}

function Dock() {
  return (
    <div className="absolute top-[1834px] left-[80px] flex h-[120px] w-[2864px] items-center rounded-[46px] border-2 border-[#443739] bg-[#241415] pl-[4.500px]">
      {APPS.map((app, i) => <Slot key={i} app={app} />)}
      <span className="ml-[22px] h-[88px] w-[2px] bg-[#5d4e50]" />
      <span className="w-[20px]" />
      {RECENT.map((app, i) => <Slot key={i} app={app} />)}
      <span className="ml-[22px] h-[88px] w-[2px] bg-[#5d4e50]" />
      <span className="w-[20px]" />
      <Slot app={[Trash]} />
    </div>
  );
}

const SPECKS = [
  [875, 2], [940, 3], [1130, 5], [1145, 3], [1260, 2], [1378, 3], [1400, 2], [1484, 3], [1550, 2],
  [1700, 4], [1790, 2], [1830, 3], [300, 2], [615, 2], [2060, 3], [2150, 2],
];

export default function App() {
  return (
    <div className="relative h-[1964px] w-[3024px] overflow-hidden bg-[linear-gradient(90deg,#140203,#080001_40%,#140203)] font-['Inter',sans-serif]">
      <MenuBar />
      <div className="absolute top-[74px] left-[271px] flex h-[2px] w-[2240px]">
        <span className="w-[1638px] bg-[#d25a57]" />
        <span className="w-[24px]" />
        <span className="flex-1 bg-[#d25a57]" />
      </div>
      <BackWindow />
      <BrowserWindow />
      <svg className="absolute bottom-0 left-0" width="3024" height="10" viewBox="0 0 3024 10" fill="#8e2320">
        {SPECKS.map(([x, r], i) => <circle key={x} cx={x} cy={3 + (i % 3) * 2} r={r * 0.7} />)}
      </svg>
      <Dock />
    </div>
  );
}
